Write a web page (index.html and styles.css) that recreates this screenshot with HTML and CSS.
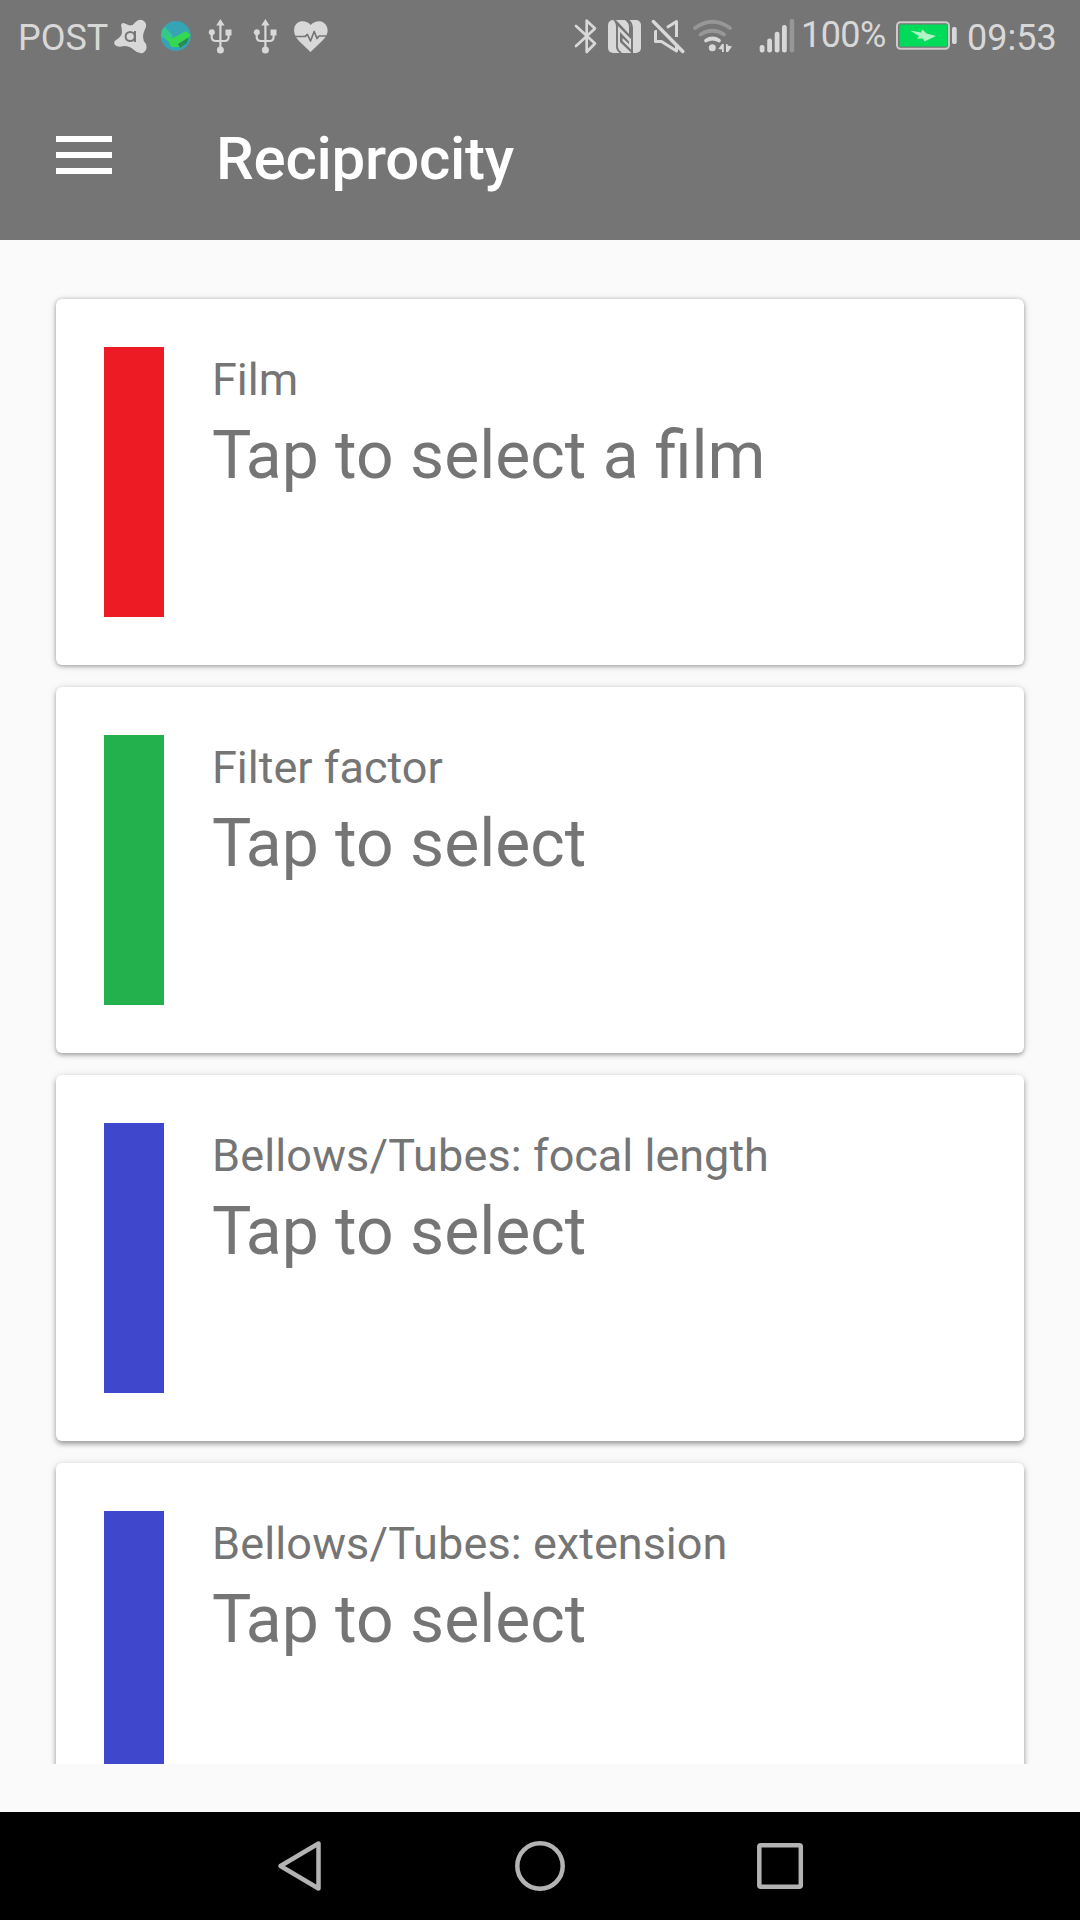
FILE: index.html
```html
<!DOCTYPE html>
<html lang="en">
<head>
<meta charset="utf-8">
<title>Reciprocity</title>
<link rel="stylesheet" href="styles.css">
</head>
<body>
<div class="screen">
  <header class="top">
    <div class="status">
      <div class="status-left">
        <span class="status-text carrier">POST</span>
        <svg width="45" height="75" viewBox="108 0 45 75"><path fill="#d8d8d8" d="M121 25Q122 21.500 126 24Q132 27.500 135 22.500Q138 19 142 20Q147 22 146 27Q143 33 143 37Q143 41 146 44Q148 50 143 53Q138 54 134 50Q130 46 124 46Q118 48 115 45Q113 42 116 40Q121 37 122 33Q122 29 121 25Z"/><g fill="none" stroke="#757575" stroke-width="2"><path d="M135 42V31"/><circle cx="130.200" cy="36.500" r="4.600"/></g></svg>
        <svg width="45" height="75" viewBox="153 0 45 75"><circle cx="175.800" cy="36" r="15" fill="#35a5b5"/><path fill="#35c88c" d="M162 30L165 27L173 36L168 41L161 36Z"/><path fill="#35d850" d="M166 36L173 38L186 31L190.500 35L188 40L180 47L171 47L169 42Z"/><path fill="#288b55" d="M178 44L189 37L187 43L180 48Z"/></svg>
        <svg width="45" height="75" viewBox="198 0 45 75"><use href="#usb"/></svg>
        <svg width="45" height="75" viewBox="198 0 45 75"><g id="usb"><path fill="none" stroke="#d8d8d8" stroke-width="2.200" d="M220.400 23V49M211.700 33V37Q211.700 41 216 41H224.500Q228.600 41 228.600 37V33"/><path fill="#d8d8d8" d="M220.400 19L224.600 25.500H216.200ZM225.500 29.500H231.500V35.500H225.500Z"/><circle cx="220.400" cy="50" r="3.500" fill="#d8d8d8"/><circle cx="211.800" cy="32.300" r="3" fill="#d8d8d8"/></g></svg>
        <svg width="45" height="75" viewBox="288 0 45 75"><path fill="#d8d8d8" d="M310.700 25C306 19.500 297 20 294.500 27C293 33 295.500 37 300 42L310.500 52L321 42C326 37 329 33 327 27C324.500 20 316 19.500 310.700 25Z"/><path fill="none" stroke="#757575" stroke-width="1.700" stroke-linejoin="round" d="M293 36.500H305L307.500 34.500L310.500 41L314.200 31.500L317 38.500L319 36H329"/></svg>
      </div>
      <div class="status-right">
        <svg width="236" height="75" viewBox="566 0 236 75">
          <path fill="none" stroke="#d8d8d8" stroke-width="2.700" stroke-linejoin="round" stroke-linecap="round" d="M576 26L595 43.500L586.700 52V20.700L595 28.500L576 46"/>
          <rect x="608" y="20" width="33" height="33" rx="5" fill="#d8d8d8"/>
          <path fill="none" stroke="#757575" stroke-width="1.900" stroke-linejoin="round" d="M614 20Q617 22 617 27V47Q617 50 621 53M628 20Q632 23 632 28V53"/>
          <path fill="#757575" d="M616 20L629 34V27Q629 23 625 20H628Q631 23 631 28V39L617 25ZM620 32L629 41.500V44L622.500 38V41L633 51.500V53H631.500L620 42Z"/>
          <g fill="none" stroke="#d8d8d8"><path stroke-width="3" stroke-linejoin="round" d="M657 31.500H655.500V41.500H661.500L676.500 51V45M667 27.500L676.500 21.500V37"/><path stroke-width="3.500" stroke-linecap="round" d="M653.300 21.500L682.800 51.500"/></g>
          <g fill="none" stroke-width="3.800" stroke-linecap="round"><path stroke="#979797" d="M695 28Q712.500 15.500 730 28M700.500 34.500Q712.500 27 724 34.500"/><path stroke="#d8d8d8" d="M706 40.500Q712.500 36.500 719 40.500"/></g>
          <g fill="#d8d8d8"><circle cx="712.300" cy="47.800" r="3.500"/><path d="M718.300 49L722 44H723.800V52H722V49.500ZM726 44H727.500V45.500L732 46.500L728 52H726Z"/>
          <rect x="759.700" y="45" width="4.800" height="7.500" rx="2.200"/><rect x="767.200" y="38.500" width="4.800" height="14" rx="2.200"/><rect x="774.700" y="31.700" width="4.800" height="20.800" rx="2.200"/><rect x="782" y="25" width="4.800" height="27.500" rx="2.200"/></g>
          <rect x="789.700" y="19" width="4.500" height="33.500" rx="2.200" fill="#979797"/>
        </svg>
        <span class="status-text percent">100%</span>
        <svg width="72" height="75" viewBox="890 0 72 75"><rect x="897" y="22.300" width="52" height="26.500" rx="3.500" fill="none" stroke="#d0c8cc" stroke-width="2"/><rect x="899.500" y="24.500" width="48" height="22" fill="#00dc5a"/><rect x="952" y="27" width="4.700" height="17" rx="1.700" fill="#d8d8d8"/><path fill="#b0f4c8" d="M910 30.500L921 32.500L922.500 29.500L926.500 33.500L936 36L924.500 41.500L923 38.500L917 38.500L919 36Z"/></svg>
        <span class="status-text clock">09:53</span>
      </div>
    </div>
    <div class="toolbar">
      <div class="menu"><i></i><i></i><i></i></div>
      <h1 class="title">Reciprocity</h1>
    </div>
  </header>
  <main class="list">
    <section class="card first"><div class="bar red"></div><div class="text"><div class="label">Film</div><div class="value"><span class="cap">T</span>ap to select a film</div></div></section>
    <section class="card"><div class="bar green"></div><div class="text"><div class="label">Filter factor</div><div class="value"><span class="cap">T</span>ap to select</div></div></section>
    <section class="card low"><div class="bar blue"></div><div class="text"><div class="label"><span class="group">Bellows/Tubes:</span> focal length</div><div class="value"><span class="cap">T</span>ap to select</div></div></section>
    <section class="card low"><div class="bar blue"></div><div class="text"><div class="label"><span class="group">Bellows/Tubes:</span> extension</div><div class="value"><span class="cap">T</span>ap to select</div></div></section>
  </main>
  <nav class="nav">
    <svg width="60" height="60" viewBox="270 1836 60 60"><path d="M318.500 1843.500V1888.500L280.500 1866Z"/></svg>
    <svg width="60" height="60" viewBox="510 1836 60 60"><circle cx="540" cy="1866" r="22.700"/></svg>
    <svg width="60" height="60" viewBox="750 1836 60 60"><rect x="759.300" y="1845.300" width="41.500" height="41.500" rx="1.500"/></svg>
  </nav>
</div>
</body>
</html>
```
FILE: styles.css
```css
* { box-sizing: border-box; }
body { margin: 0; font-family: Roboto, sans-serif; background: #fafafa; }
svg { display: block; flex: none; }
.screen { width: 1080px; height: 1920px; display: flex; flex-direction: column; overflow: hidden; }
.top { height: 240px; flex: none; background: #757575; }
.status { height: 75px; display: flex; justify-content: space-between; }
.status-left, .status-right { display: flex; }
.status-text { font-size: 36px; line-height: 42px; color: #d8d8d8; white-space: nowrap; }
.carrier { width: 90px; margin: 17px 0 0 18px; }
.percent { width: 88px; padding-top: 14px; letter-spacing: -.6px; text-indent: -1px; }
.clock { width: 118px; padding: 17px 0 0 5px; }
.toolbar { height: 165px; display: flex; padding-left: 56px; }
.menu { width: 160px; display: flex; flex-direction: column; gap: 10px; padding-top: 61px; }
.menu i { width: 56px; height: 6px; background: #fff; }
.title { margin: 0; padding-top: 49px; font-size: 60px; line-height: 70px; font-weight: 500; letter-spacing: -.25px; color: #fff; }
.list { height: 1524px; flex: none; margin-bottom: 48px; padding: 59px 56px 0; display: flex; flex-direction: column; gap: 22px; overflow: hidden; }
.card { height: 366px; flex: none; padding: 48px; display: flex; gap: 48px; background: #fff; border-radius: 6px; box-shadow: 0 2px 4px rgba(0,0,0,.3), 0 1px 8px rgba(0,0,0,.12); }
.first { box-shadow: 0 1px 4px rgba(0,0,0,.34), 0 1px 8px rgba(0,0,0,.12); }
.low { box-shadow: 0 3px 5px rgba(0,0,0,.32), 0 1px 8px rgba(0,0,0,.12); }
.bar { width: 60px; height: 270px; }
.red { background: #ed1c24; }
.green { background: #22b14c; }
.blue { background: #3f48cc; }
.text { color: #757575; white-space: nowrap; }
.label { padding-top: 6px; font-size: 45px; line-height: 53px; }
.group { letter-spacing: .14px; }
.value { padding-top: 11px; font-size: 66px; line-height: 77px; }
.cap { letter-spacing: -5.6px; }
.nav { height: 108px; flex: none; background: #000; display: flex; justify-content: center; align-items: center; gap: 180px; }
.nav svg { fill: none; stroke: #b3b3b3; stroke-width: 4.5px; stroke-linejoin: round; }
```
